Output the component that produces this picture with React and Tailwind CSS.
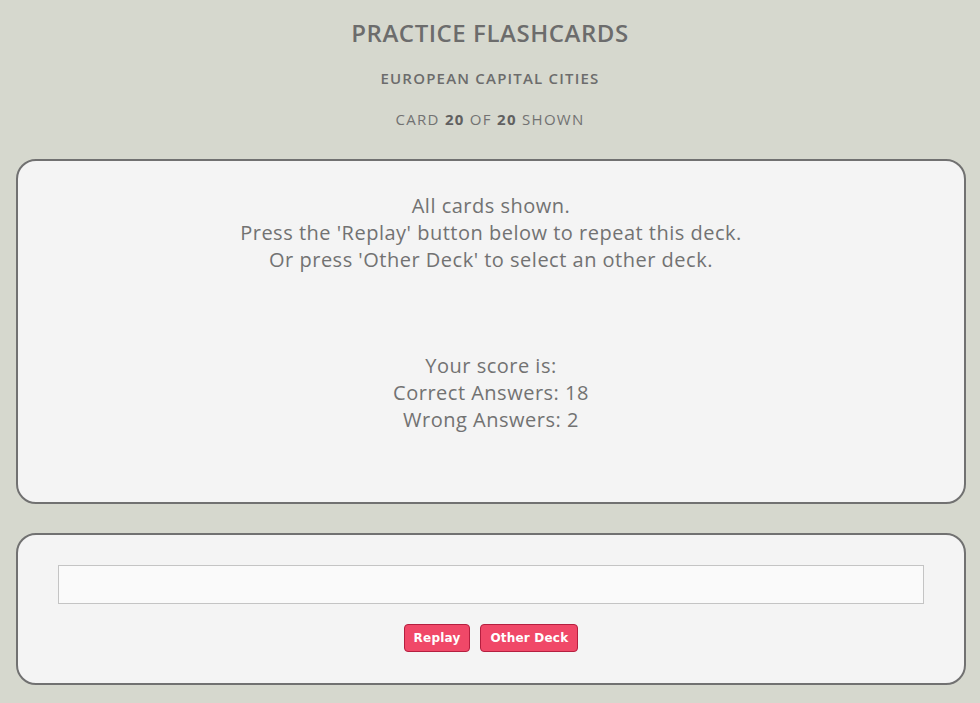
export default function App() {
  return (
    <div
      className="min-h-[703px] bg-[#d6d8ce] pt-[18px] pb-[18px] text-[#727272]"
      style={{ fontFamily: '"Open Sans", "Noto Sans", sans-serif' }}
    >
      <h1 className="text-center text-[24px] font-semibold leading-[30px] tracking-[0.55px] text-[#6c6c6c]">
        PRACTICE FLASHCARDS
      </h1>
      <h2 className="mt-[20px] text-center text-[15px] font-semibold leading-[20px] tracking-[1.2px] text-[#6c6c6c]">
        EUROPEAN CAPITAL CITIES
      </h2>
      <p className="mt-[21px] text-center text-[15px] leading-[20px] tracking-[1.3px]">
        CARD <b className="text-[#606060]">20</b> OF <b className="text-[#606060]">20</b> SHOWN
      </p>

      <div className="ml-4 mt-[30px] w-[950px] rounded-[20px] border-2 border-[#717171] bg-[#f4f4f4] pt-[31px] pb-[69px] text-center text-[20px] leading-[27px] tracking-[0.5px]">
        <p>All cards shown.</p>
        <p>Press the 'Replay' button below to repeat this deck.</p>
        <p>Or press 'Other Deck' to select an other deck.</p>
        <div className="mt-[79px]">
          <p>Your score is:</p>
          <p>Correct Answers: 18</p>
          <p>Wrong Answers: 2</p>
        </div>
      </div>

      <div className="ml-4 mt-[29px] w-[950px] rounded-[20px] border-2 border-[#717171] bg-[#f4f4f4] px-[40px] pt-[30px] pb-[31px]">
        <input
          type="text"
          className="block h-[39px] w-full border border-[#c4c4c4] bg-[#fafafa] px-2 outline-none"
        />
        <div className="mt-[20px] flex justify-center gap-[10px]">
          <button
            type="button"
            className="h-[28px] rounded-[4px] border border-[#b51f3f] bg-[#f04868] px-[9px] text-[12px] font-bold tracking-[0.2px] text-white"
            style={{ fontFamily: '"DejaVu Sans", Verdana, sans-serif' }}
          >
            Replay
          </button>
          <button
            type="button"
            className="h-[28px] rounded-[4px] border border-[#b51f3f] bg-[#f04868] px-[9px] text-[12px] font-bold tracking-[0.2px] text-white"
            style={{ fontFamily: '"DejaVu Sans", Verdana, sans-serif' }}
          >
            Other Deck
          </button>
        </div>
      </div>
    </div>
  )
}
